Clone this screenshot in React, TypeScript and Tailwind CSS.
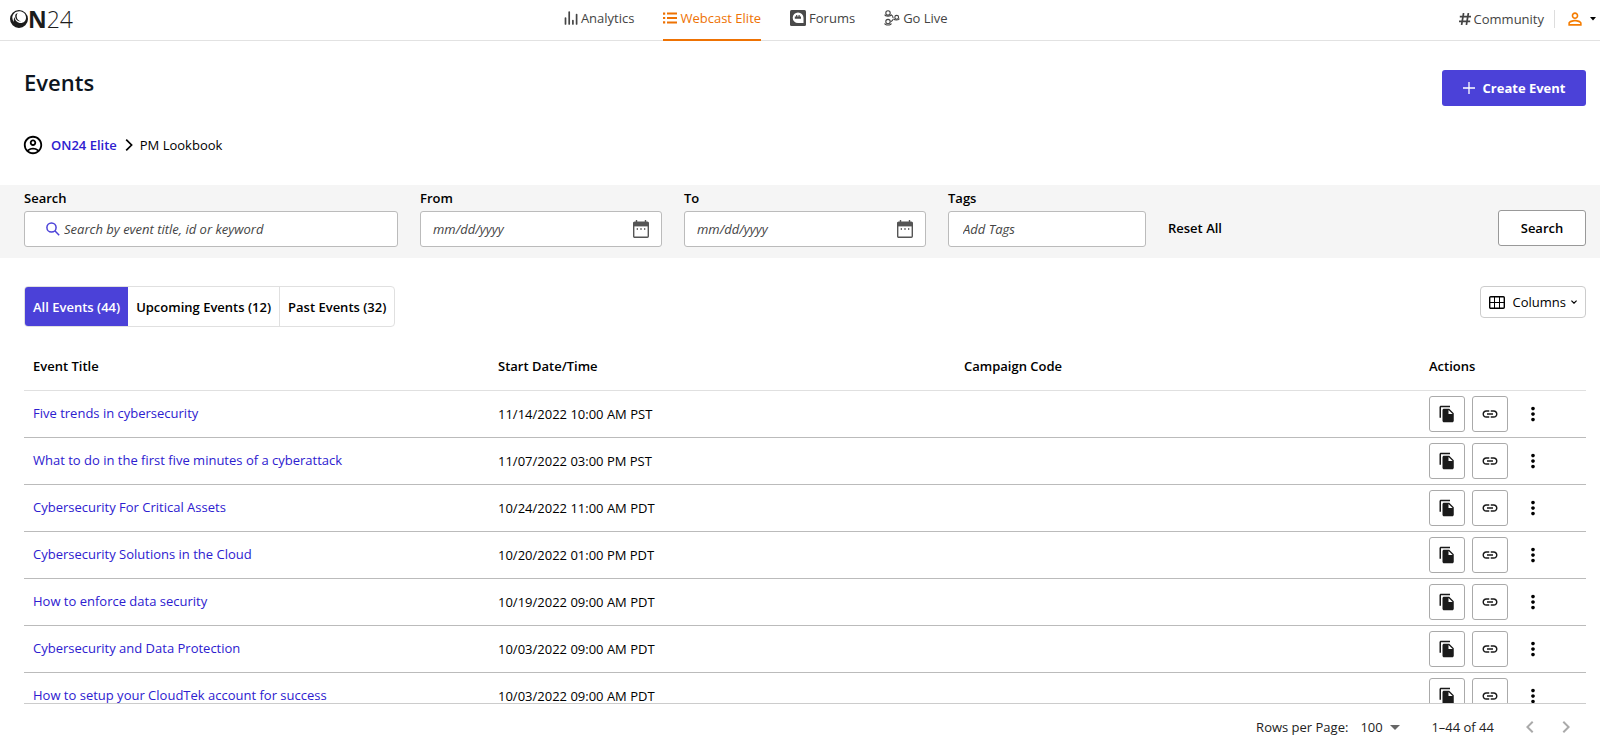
import React from "react";
import {
  MdArrowDropDown,
  MdChevronLeft,
  MdChevronRight,
  MdFileCopy,
  MdLink,
  MdMoreVert,
  MdOutlineAccountCircle,
  MdPersonOutline,
} from "react-icons/md";

type EventRow = { title: string; start: string };

const events: EventRow[] = [
  { title: "Five trends in cybersecurity", start: "11/14/2022 10:00 AM PST" },
  { title: "What to do in the first five minutes of a cyberattack", start: "11/07/2022 03:00 PM PST" },
  { title: "Cybersecurity For Critical Assets", start: "10/24/2022 11:00 AM PDT" },
  { title: "Cybersecurity Solutions in the Cloud", start: "10/20/2022 01:00 PM PDT" },
  { title: "How to enforce data security", start: "10/19/2022 09:00 AM PDT" },
  { title: "Cybersecurity and Data Protection", start: "10/03/2022 09:00 AM PDT" },
  { title: "How to setup your CloudTek account for success", start: "10/03/2022 09:00 AM PDT" },
];

function Logo() {
  return (
    <a href="#" aria-label="ON24" className="flex items-center text-[#1c1c1c]">
      <svg viewBox="0 0 18 18" className="size-[18px]" fill="currentColor">
        <path
          fillRule="evenodd"
          d="M9 0a9 9 0 1 0 0 18A9 9 0 0 0 9 0Zm1 1.300c3.400.3 6 2.900 6 6.200 0 3.300-2.300 5.500-5.200 5.500-3.500 0-5.900-2.500-6.200-6C3.700 8.700 3.600 10.500 4 12A6.700 6.700 0 0 1 2.300 7.800C2.300 4 5.600.9 10 1.300Z"
        />
        <path d="M5.200 5.800c-.1 3.200 2.300 5.800 5.800 5.600-2.400-.6-4.100-2.300-4.300-4.700-.1-1.500.3-2.700 1.100-3.700-1.600.4-2.500 1.500-2.600 2.800Z" />
      </svg>
      <span className="flex items-center text-[23px] leading-6">
        <b className="font-bold">N</b>
        <span className="font-light">24</span>
      </span>
    </a>
  );
}

function BarsIcon() {
  return (
    <svg viewBox="0 0 14 14" className="size-[14px]" fill="none" stroke="currentColor" strokeWidth="1.700" strokeLinecap="round">
      <path d="M1.500 7v6M5.200 1v12M8.900 9.500V13M12.600 3.500V13" />
    </svg>
  );
}

function ListIcon() {
  return (
    <svg viewBox="0 0 14 12" className="h-3 w-[14px]" fill="currentColor">
      <path d="M0 .5h2.200v2.200H0zM4 .6h10v2H4zM0 4.900h2.200v2.200H0zM4 5h10v2H4zM0 9.300h2.200v2.200H0zM4 9.400h10v2H4z" />
    </svg>
  );
}

function ForumIcon() {
  return (
    <svg viewBox="0 0 16 16" className="size-4">
      <rect width="16" height="16" rx="1.500" fill="#4a4a4a" />
      <path d="M8 2.400A5.300 5.300 0 1 0 8 13h5.500V7.800A5.400 5.400 0 0 0 8 2.400Z" fill="#fff" />
      <path d="M4.800 6.400h1.300V5h1.200v1.400h1.200V5h1.200v1.400H11v2.300H4.800z" fill="#4a4a4a" />
    </svg>
  );
}

function LiveIcon() {
  return (
    <svg viewBox="0 0 16 16" className="size-4" fill="none" stroke="currentColor" strokeWidth="1.100">
      <circle cx="4" cy="2.900" r="2.200" />
      <path d="M.7 4.600c.5 2 6.100 2 6.600 0" />
      <circle cx="4" cy="11.600" r="2.200" />
      <path d="M.7 13.300c.5 2.200 6.100 2.200 6.600 0M7 4.800c1.500.6 2.100 1.800 2.100 3.100M6.700 11.600c1.300-.3 2.100-1.200 2.700-2.700" />
      <circle cx="12.700" cy="7.300" r="1.900" />
      <path d="M9.800 8.600c.5 1.900 5.200 1.900 5.700 0" />
    </svg>
  );
}

function SearchIcon() {
  return (
    <svg viewBox="0 0 14 14" className="size-[14px] shrink-0" fill="none" stroke="#4b41d8" strokeWidth="1.500">
      <circle cx="5.500" cy="5.500" r="4.600" />
      <path d="M8.800 8.800l4.400 4.400" />
    </svg>
  );
}

function CalendarIcon() {
  return (
    <svg viewBox="0 0 16 18" className="h-[18px] w-4">
      <path d="M2.800 0h1.400v3H2.800zM11.800 0h1.400v3h-1.400z" fill="#555" />
      <rect x=".7" y="2.200" width="14.600" height="15" rx="1" fill="#fff" stroke="#555" strokeWidth="1.400" />
      <path d="M.7 2h14.600v4.400H.7z" fill="#555" />
      <path d="M3.700 8.300H5v1.400H3.700zM7.300 8.300h1.400v1.400H7.300zM11 8.300h1.300v1.400H11z" fill="#444" />
    </svg>
  );
}

function GridIcon() {
  return (
    <svg viewBox="0 0 16 13" className="h-[13px] w-4" fill="none" stroke="currentColor">
      <rect x=".7" y=".7" width="14.600" height="11.600" rx="1" strokeWidth="1.400" />
      <path d="M.7 6.500h14.600M5.500.7v11.600M10.500.7v11.600" strokeWidth="1" />
    </svg>
  );
}

const navLink = "flex h-[41px] items-center gap-[3px] border-b-2 border-transparent pb-1 text-[#444]";

function Header() {
  return (
    <header className="flex h-[41px] items-start justify-between border-b border-[#e2e2e2] pr-1 pl-[10px]">
      <div className="flex h-[38px] items-center">
        <Logo />
      </div>
      <nav className="mr-5 flex gap-[29px]">
        <a href="#" className={navLink}><BarsIcon />Analytics</a>
        <a href="#" aria-current="page" className="flex h-[41px] items-center gap-[3px] border-b-2 border-[#ee7203] pb-1 text-[#ee7203]"><ListIcon />Webcast Elite</a>
        <a href="#" className={navLink}><ForumIcon />Forums</a>
        <a href="#" className={navLink}><LiveIcon />Go Live</a>
      </nav>
      <div className="flex h-[37px] items-center justify-end text-[#444]">
        <a href="#" className="flex items-center gap-[3px]">
          <svg viewBox="0 0 12 12" className="size-3" fill="none" stroke="currentColor" strokeWidth="1.700">
            <path d="M4.600 0L2.600 12M9.400 0l-2 12M.8 3.700H12M0 8.300h11.200" />
          </svg>
          Community
        </a>
        <span className="mx-[10px] h-[18px] w-px bg-[#ddd]" />
        <button aria-label="Account" className="flex items-center gap-[5px]">
          <MdPersonOutline className="size-5 text-[#f57c00]" />
          <svg viewBox="0 0 6 4" className="h-1 w-[6px] text-black" fill="currentColor"><path d="M0 0h6L3 3.500z" /></svg>
        </button>
      </div>
    </header>
  );
}

const fieldLabel = "block h-[22px] leading-[18px] font-semibold";
const fieldBox = "flex h-9 items-center rounded-[3px] border border-[#bbb] bg-white";
const fieldInput = "w-full min-w-0 bg-transparent italic outline-none placeholder:text-[#444]";

function DateField({ id, label }: { id: string; label: string }) {
  return (
    <div className="w-[242px]">
      <label htmlFor={id} className={fieldLabel}>{label}</label>
      <div className={`${fieldBox} px-3`}>
        <input id={id} type="text" placeholder="mm/dd/yyyy" className={fieldInput} />
        <button type="button" aria-label={`Pick ${label} date`}><CalendarIcon /></button>
      </div>
    </div>
  );
}

function Filters() {
  return (
    <form className="mt-[29px] flex h-[73px] items-start gap-[22px] bg-[#f5f5f5] px-[14px] pt-1 pl-6">
      <div className="w-[374px]">
        <label htmlFor="search" className={fieldLabel}>Search</label>
        <div className={`${fieldBox} gap-1 px-[21px]`}>
          <SearchIcon />
          <input id="search" type="text" placeholder="Search by event title, id or keyword" className={fieldInput} />
        </div>
      </div>
      <DateField id="from" label="From" />
      <DateField id="to" label="To" />
      <div className="w-[198px]">
        <label htmlFor="tags" className={fieldLabel}>Tags</label>
        <div className={`${fieldBox} px-[14px]`}>
          <input id="tags" type="text" placeholder="Add Tags" className={fieldInput} />
        </div>
      </div>
      <button type="button" className="mt-[21px] h-9 font-semibold">Reset All</button>
      <button type="button" className="mt-[21px] ml-auto h-9 w-[88px] rounded-[3px] border border-[#999] bg-white font-semibold">Search</button>
    </form>
  );
}

const actionButton = "flex size-9 items-center justify-center rounded-[3px] border border-[#aaa] text-[#1a1a1a]";

function EventsTable() {
  return (
    <div className="mt-[13px] mr-[14px] ml-6 h-[364px] overflow-hidden border-b border-[#ccc]">
      <table className="w-full table-fixed border-collapse text-left leading-4">
        <thead>
          <tr className="h-[50px] border-b border-[#e0e0e0]">
            <th className="w-[465px] px-[9px] pt-[2px] font-semibold">Event Title</th>
            <th className="w-[466px] px-[9px] pt-[2px] font-semibold">Start Date/Time</th>
            <th className="w-[465px] px-[9px] pt-[2px] font-semibold">Campaign Code</th>
            <th className="px-[9px] pt-[2px] font-semibold">Actions</th>
          </tr>
        </thead>
        <tbody>
          {events.map((event) => (
            <tr key={event.title} className="h-[47px] border-b border-[#bbb]">
              <td className="px-[9px] pb-[2px]"><a href="#" className="text-[#2d20cf]">{event.title}</a></td>
              <td className="px-[9px]">{event.start}</td>
              <td />
              <td className="px-[9px]">
                <div className="flex items-center gap-[7px]">
                  <button aria-label="Copy event" className={actionButton}><MdFileCopy className="size-[18px]" /></button>
                  <button aria-label="Copy link" className={actionButton}><MdLink className="size-[18px]" /></button>
                  <button aria-label="More actions" className="flex size-9 items-center justify-center"><MdMoreVert className="size-[22px]" /></button>
                </div>
              </td>
            </tr>
          ))}
        </tbody>
      </table>
    </div>
  );
}

export default function App() {
  return (
    <div className="bg-white font-['Open_Sans','Noto_Sans',sans-serif] text-[13px] leading-5 text-black">
      <Header />
      <main>
        <div className="flex items-start justify-between pr-[14px] pl-6">
          <h1 className="mt-[27px] text-[22px] leading-7 font-semibold text-[#0d1520]">Events</h1>
          <button className="mt-[29px] flex h-9 w-36 items-center justify-center gap-2 rounded-[3px] bg-[#4b41d8] font-bold text-white">
            <svg viewBox="0 0 12 12" className="size-3" stroke="currentColor" strokeWidth="1.300"><path d="M6 0v12M0 6h12" /></svg>
            Create Event
          </button>
        </div>
        <nav aria-label="Breadcrumb" className="mt-7 flex items-center gap-[7px] pl-[22px]">
          <MdOutlineAccountCircle className="size-[22px]" />
          <a href="#" className="font-semibold text-[#2d20cf]">ON24 Elite</a>
          <svg viewBox="0 0 8 12" className="ml-px h-3 w-2" fill="none" stroke="currentColor" strokeWidth="1.700"><path d="M1.200.6L6.600 6l-5.400 5.400" /></svg>
          <span>PM Lookbook</span>
        </nav>
        <Filters />
        <div className="mt-7 flex items-start justify-between pr-[14px] pl-6">
          <div className="flex h-[41px] overflow-hidden rounded border border-[#e0e0e0] font-semibold">
            <button className="bg-[#4b41d8] px-2 text-white">All Events (44)</button>
            <button className="px-2">Upcoming Events (12)</button>
            <button className="border-l border-[#e0e0e0] px-2">Past Events (32)</button>
          </div>
          <button className="flex h-8 items-center rounded border border-[#ccc] px-2">
            <GridIcon />
            <span className="mr-1 ml-2">Columns</span>
            <svg viewBox="0 0 6 4" className="ml-px h-1 w-[6px]" fill="none" stroke="currentColor" strokeWidth="1.200"><path d="M.4.6L3 3.200 5.600.6" /></svg>
          </button>
        </div>
        <EventsTable />
        <footer className="flex h-[46px] items-center justify-end pr-[22px] text-[#222]">
          <label htmlFor="rows">Rows per Page:</label>
          <div className="ml-3 flex items-center">
            <select id="rows" className="appearance-none bg-transparent"><option>100</option></select>
            <MdArrowDropDown className="size-6 text-[#666]" />
          </div>
          <span className="ml-6">1–44 of 44</span>
          <button aria-label="Previous page" className="ml-6"><MdChevronLeft className="size-6 text-[#aaa]" /></button>
          <button aria-label="Next page" className="ml-3"><MdChevronRight className="size-6 text-[#aaa]" /></button>
        </footer>
      </main>
    </div>
  );
}
